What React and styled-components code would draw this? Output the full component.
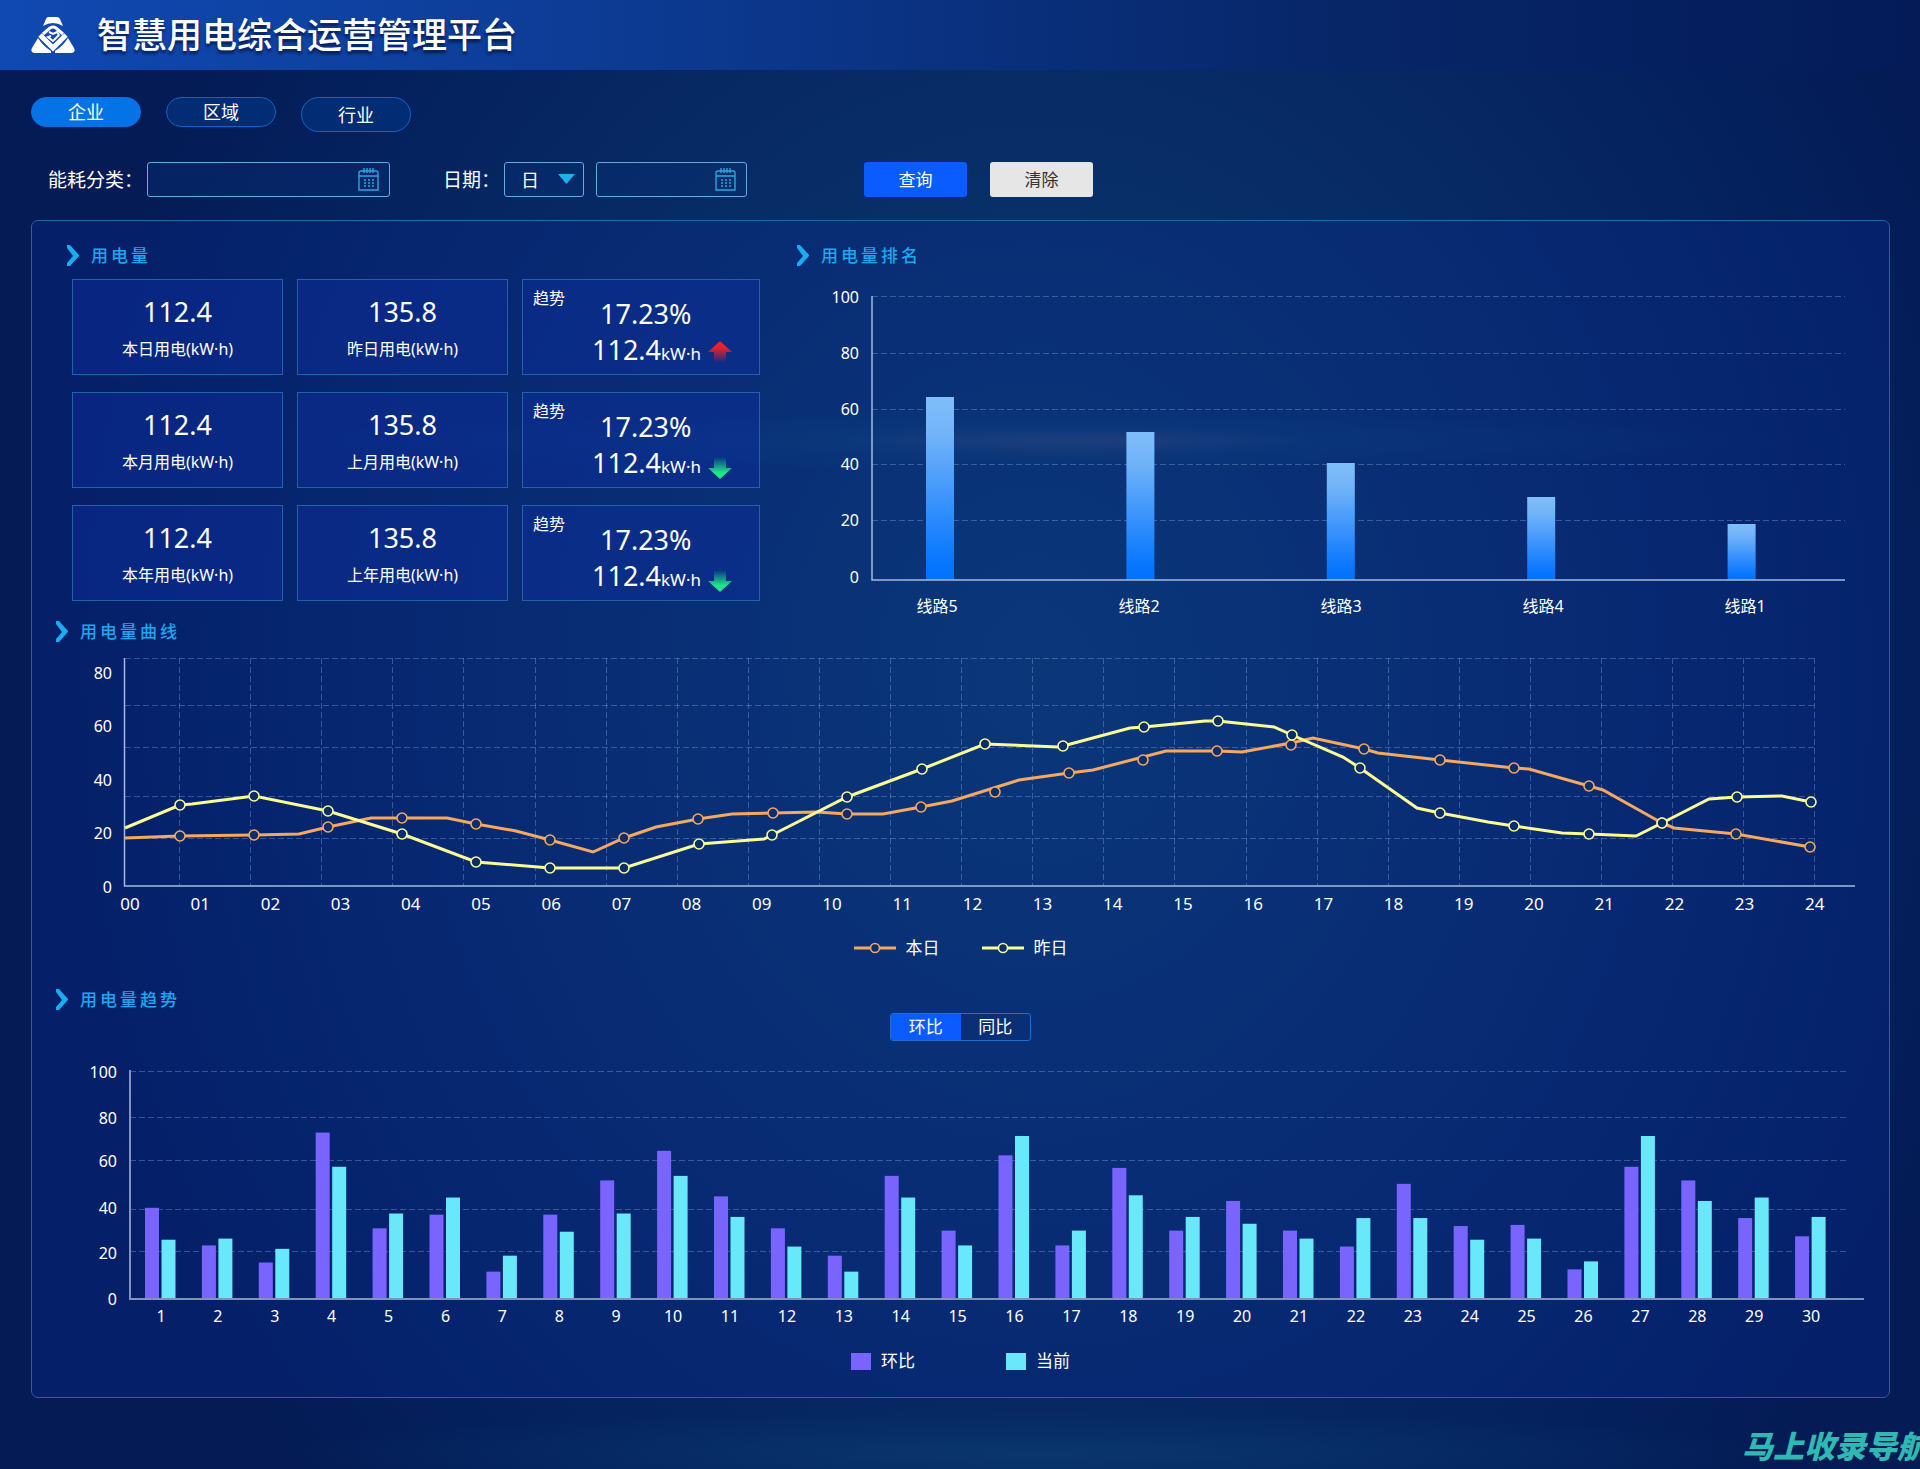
import React, { useState } from 'react';
import styled, { createGlobalStyle } from 'styled-components';

const GlobalStyle = createGlobalStyle`
  * {
    box-sizing: border-box;
  }

  body {
    margin: 0;
    background: #041b55;
  }

  body, button, input, select {
    font-family: "Noto Sans", "Noto Sans CJK SC", sans-serif;
  }
`

const Page = styled.div`
  min-height: 100vh;
  overflow: hidden;
  color: #fff;
  background:
    radial-gradient(ellipse 12% 1% at 56% 30%, rgba(90, 80, 110, 0.35), transparent),
    radial-gradient(ellipse 40% 2% at 54% 30%, rgba(20, 100, 140, 0.25), transparent),
    radial-gradient(ellipse 40% 3% at 54% 99%, rgba(20, 100, 140, 0.25), transparent),
    radial-gradient(ellipse 52% 80% at 54% 46%, #0c3d6e 0%, #082c66 50%, #04205c 85%, #041b55 100%);
`

const Header = styled.header`
  display: flex;
  align-items: center;
  gap: 22px;
  height: 70px;
  padding: 0 31px;
  background: linear-gradient(90deg, #1049b2 0%, #0d3d98 28%, #072668 70%, #041b58 100%);

  h1 {
    margin: 0;
    font-size: 35px;
    line-height: 40px;
    font-weight: 500;
    text-shadow: 0 3px 3px rgba(0, 10, 50, 0.7);
  }
`

const Main = styled.main`
  padding: 27px 30px 0 31px;
`

const Tabs = styled.nav`
  display: flex;
  align-items: flex-start;
  gap: 25px;
  min-height: 35px;
`

const Tab = styled.button`
  width: 110px;
  height: ${({ $tall }) => ($tall ? 35 : 30)}px;
  padding: 0;
  border: 1px solid ${({ $active }) => ($active ? '#0473e6' : '#1763bf')};
  border-radius: 18px;
  background: ${({ $active }) => ($active ? '#0473e6' : '#022c74')};
  color: #fff;
  font-size: 18px;
  line-height: 24px;
  cursor: pointer;
`

const Filters = styled.form`
  display: flex;
  flex-wrap: wrap;
  align-items: center;
  margin: 30px 0 23px;
  padding-left: 17px;
`

const Field = styled.div`
  display: flex;
  align-items: center;
  gap: 4px;
  margin-right: ${({ $space }) => $space}px;

  label {
    font-size: 19px;
    line-height: 24px;
  }
`

const InputBox = styled.div`
  display: flex;
  align-items: center;
  width: ${({ $width }) => $width}px;
  height: 35px;
  padding-right: 10px;
  border: 1px solid #64abe0;
  border-radius: 3px;
  background: rgba(10, 50, 120, 0.35);

  input {
    flex: 1;
    min-width: 0;
    height: 100%;
    padding: 0 8px;
    border: 0;
    outline: 0;
    background: transparent;
    color: #fff;
    font-size: 16px;
  }
`

const SelectBox = styled.div`
  position: relative;
  margin-right: 8px;

  select {
    appearance: none;
    width: 80px;
    height: 35px;
    padding: 0 16px;
    border: 1px solid #64abe0;
    border-radius: 3px;
    background: rgba(10, 50, 120, 0.35);
    color: #fff;
    font-size: 18px;
  }

  option {
    background: #0a2c70;
  }

  svg {
    position: absolute;
    top: 12px;
    right: 9px;
    pointer-events: none;
  }
`

const Button = styled.button`
  width: 103px;
  height: 35px;
  margin-right: 23px;
  padding: 0;
  border: 0;
  border-radius: 3px;
  background: ${({ $primary }) => ($primary ? '#0a5cff' : '#e6e6e6')};
  color: ${({ $primary }) => ($primary ? '#fff' : '#333')};
  font-size: 17px;
  line-height: 24px;
  cursor: pointer;
`

const Panel = styled.div`
  padding: 24px;
  border: 1px solid #1d69a4;
  border-radius: 7px;
  background: rgba(10, 44, 150, 0.3);
`

const TopRow = styled.div`
  display: grid;
  grid-template-columns: 693fr 1068fr;
  gap: 37px;
  padding-left: 11px;
`

const Section = styled.section`
  margin-top: ${({ $top = 0 }) => $top}px;
`

const Heading = styled.h2`
  display: flex;
  align-items: center;
  gap: 12px;
  height: 22px;
  margin: 0 0 ${({ $tight }) => ($tight ? 2 : 12)}px;
  color: #1aa9f0;
  font-size: 17px;
  line-height: 20px;
  font-weight: 500;
  letter-spacing: 3px;
`

const Stats = styled.div`
  display: grid;
  grid-template-columns: 211fr 211fr 238fr;
  gap: 17px 14px;
  padding-left: 5px;
`

const Card = styled.div`
  height: 96px;
  border: 1px solid #1f64a4;
  background: rgba(14, 46, 160, 0.45);
`

const ValueCard = styled(Card)`
  padding-top: 14px;
  text-align: center;

  strong {
    display: block;
    font-size: 27px;
    line-height: 36px;
    font-weight: 400;
  }

  span {
    display: block;
    margin-top: 7px;
    font-size: 16px;
    line-height: 24px;
  }
`

const TrendCard = styled(Card)`
  display: flex;
  align-items: flex-start;
  gap: 27px;
  padding: 7px 10px;

  > span {
    font-size: 16px;
    line-height: 22px;
  }
`

const Figures = styled.div`
  padding-top: 9px;
  font-size: 27px;
  line-height: 36px;

  > div:first-child {
    padding-left: 8px;
  }
`

const Amount = styled.div`
  display: flex;
  align-items: baseline;

  small {
    font-size: 17px;
  }

  svg {
    align-self: center;
    margin-left: 7px;
  }
`

const Chart = styled.svg`
  display: block;
  width: 100%;
  height: auto;

  text {
    fill: #fff;
    font-size: 16px;
  }

  .hour {
    font-size: 17px;
  }

  .grid {
    stroke: rgba(150, 175, 225, 0.36);
    stroke-dasharray: 6 3;
  }

  .axis {
    stroke: #a3bbe2;
    stroke-width: 1.5;
  }

  .wide-axis {
    stroke: #7f93bd;
    stroke-width: 2;
  }
`

const Legend = styled.ul`
  display: flex;
  justify-content: center;
  gap: ${({ $gap }) => $gap}px;
  height: 24px;
  margin: ${({ $top }) => $top}px 0 0;
  padding: 0;
  list-style: none;
  font-size: 17px;
  line-height: 24px;

  li {
    display: flex;
    align-items: center;
    gap: 10px;
  }
`

const Swatch = styled.i`
  width: 20px;
  height: 17px;
  background: ${({ $color }) => $color};
`

const Toggle = styled.div`
  display: flex;
  width: 141px;
  height: 28px;
  margin: 0 auto 19px;
  border: 1px solid #1f6fd2;
  border-radius: 3px;
  overflow: hidden;

  button {
    flex: 1;
    padding: 0;
    border: 0;
    background: transparent;
    color: #fff;
    font-size: 17px;
    line-height: 24px;
    cursor: pointer;
  }

  button[aria-pressed="true"] {
    background: #0a5cff;
  }
`

const Footer = styled.footer`
  display: flex;
  justify-content: flex-end;
  margin-right: -8px;
  padding-top: 32px;
  color: #2fb9b2;
  font-size: 31px;
  line-height: 32px;
  font-weight: 900;
  font-style: italic;
  white-space: nowrap;
`

const ORANGE = '#f5a860';
const YELLOW = '#fbfc94';
const PURPLE = '#7a64ff';
const CYAN = '#68e8f8';

const stats = [
    { now: '本日用电(kW·h)', before: '昨日用电(kW·h)', up: true },
    { now: '本月用电(kW·h)', before: '上月用电(kW·h)', up: false },
    { now: '本年用电(kW·h)', before: '上年用电(kW·h)', up: false },
];

const ranking = [
    { name: '线路5', height: 183 },
    { name: '线路2', height: 148 },
    { name: '线路3', height: 117 },
    { name: '线路4', height: 83 },
    { name: '线路1', height: 56 },
];

// [x, y, has a marker]
const today = [
    [69, 183], [124, 181, 1], [198, 180, 1], [243, 179], [272, 172, 1], [315, 163], [346, 163, 1],
    [391, 163], [420, 169, 1], [460, 176], [494, 185, 1], [537, 197], [568, 183, 1], [600, 172],
    [642, 164, 1], [676, 159], [717, 158, 1], [761, 157], [791, 159, 1], [827, 159], [865, 152, 1],
    [896, 146], [963, 125], [1013, 118, 1], [1037, 115], [1110, 96], [1161, 96, 1], [1186, 97],
    [1235, 88], [1257, 83], [1308, 94, 1], [1322, 98], [1384, 105, 1], [1458, 113, 1], [1473, 114],
    [1533, 131, 1], [1547, 135], [1606, 168, 1], [1618, 173], [1680, 179, 1], [1754, 192, 1],
];

// markers that sit a little below the line
const todayLoose = [[939, 137], [1087, 105], [1235, 90]];

const yesterday = [
    [69, 173], [124, 150, 1], [136, 149], [198, 141, 1], [272, 156, 1], [346, 179, 1], [420, 207, 1],
    [494, 213, 1], [568, 213, 1], [643, 189, 1], [708, 184], [716, 180, 1], [791, 142, 1],
    [866, 114, 1], [929, 89, 1], [1002, 92], [1007, 91, 1], [1074, 73], [1088, 72, 1], [1149, 66],
    [1162, 66, 1], [1218, 72], [1236, 80, 1], [1287, 102], [1304, 113, 1], [1361, 153],
    [1384, 158, 1], [1432, 167], [1458, 171, 1], [1506, 178], [1533, 179, 1], [1580, 181],
    [1606, 168, 1], [1653, 144], [1681, 142, 1], [1726, 141], [1755, 147, 1],
];

const previous = [
    40, 23.5, 16, 73, 31, 37, 12, 37, 52, 65, 45, 31, 19, 54, 30,
    63, 23.5, 57.5, 30, 43, 30, 23, 50.5, 32, 32.5, 13, 58, 52, 35.5, 27.5,
];

const current = [
    26, 26.5, 22, 58, 37.5, 44.5, 19, 29.5, 37.5, 54, 36, 23, 12, 44.5, 23.5,
    71.5, 30, 45.5, 36, 33, 26.5, 35.5, 35.5, 26, 26.5, 16.5, 71.5, 43, 44.5, 36,
];

const Logo = () => (
    <svg width="44" height="36" viewBox="0 0 44 36" fill="#fff" aria-hidden="true">
        <path d="M17 0h9q2 0 3 2l3 7q-10-6-20 0l3-7q1-2 2-2z" />
        <path d="M7 21q5 8 13 13v2H3q-4-1-2-5z" />
        <path d="M37 21q-5 8-13 13v2h17q4-1 2-5z" />
        <g fill="none" stroke="#fff">
            <path d="M9 18l13 13 13-13" strokeWidth="5" />
            <path d="M12 17l7-6q3-2 6 0l7 6" strokeWidth="3" />
            <path d="M18 15l4 2 4-2 2 3-6 6-5-4 3-1" strokeWidth="2" />
        </g>
    </svg>
);

const Chevron = () => (
    <svg width="12" height="22" viewBox="0 0 12 22" fill="#18adf2" aria-hidden="true">
        <path d="M0 0h3l9 10v1L3 21H0v-3l6-7-6-8z" />
    </svg>
);

const CalendarIcon = () => (
    <svg width="21" height="23" viewBox="0 0 21 23" fill="none" stroke="#2ba6e0" strokeWidth="1.4" aria-hidden="true">
        <path d="M3 3h15q2 0 2 2v17H1V5q0-2 2-2zM1 8h19" />
        <path d="M6 0v5M9 0v5M12 0v5M15 0v5" />
        <path d="M6 12h2M10 12h2M14 12h2M6 15h2M10 15h2M14 15h2M6 18h2M10 18h2M14 18h2" />
    </svg>
);

const TrendArrow = ({ up }) => {
    const id = up ? 'arrow-up' : 'arrow-down';
    const color = up ? '#e8202c' : '#1ee48c';

    return (
        <svg width="24" height="28" viewBox="0 0 24 28" role="img" aria-label={up ? '上升' : '下降'}>
            <defs>
                <linearGradient id={id} x1="0" x2="0" y1={up ? 0 : 1} y2={up ? 1 : 0}>
                    <stop offset="0.3" stopColor={color} />
                    <stop offset="1" stopColor={color} stopOpacity="0" />
                </linearGradient>
            </defs>
            <path
                d={up ? 'M12 3l12 11h-6v11H6V14H0z' : 'M12 28L0 17h6V6h12v11h6z'}
                fill={`url(#${id})`}
            />
        </svg>
    );
};

const YLabels = ({ x, items }) => items.map(([label, y]) => (
    <text key={label} x={x} y={y + 6} textAnchor="end">{label}</text>
));

const RankingChart = () => (
    <Chart viewBox="0 0 1068 342" role="img" aria-label="用电量排名">
        <defs>
            <linearGradient id="rank" x1="0" x2="0" y1="0" y2="1">
                <stop offset="0" stopColor="#80bdf9" />
                <stop offset="0.2" stopColor="#72b4f9" />
                <stop offset="0.9" stopColor="#0776ff" />
                <stop offset="1" stopColor="#0072ff" />
            </linearGradient>
        </defs>
        <YLabels x={62} items={[[100, 18], [80, 74], [60, 130], [40, 185], [20, 241], [0, 298]]} />
        {[17.5, 74.5, 130.5, 185.5, 241.5].map(y => (
            <line key={y} className="grid" x1="75" x2="1048" y1={y} y2={y} />
        ))}
        {ranking.map(({ name, height }, i) => (
            <g key={name}>
                <rect x={129 + i * 200.4} y={301 - height} width="28" height={height} fill="url(#rank)" />
                <text x={140 + i * 202} y="333" textAnchor="middle">{name}</text>
            </g>
        ))}
        <path className="axis" d="M75 17v284h973" fill="none" />
    </Chart>
);

const Series = ({ points, loose = [], color }) => (
    <g fill="none" stroke={color}>
        <polyline points={points.map(([x, y]) => `${x},${y}`).join(' ')} strokeWidth="3" />
        {[...points.filter(p => p[2]), ...loose].map(([x, y]) => (
            <circle key={x} cx={x} cy={y} r="5" fill="#0a2d6b" strokeWidth="1.6" />
        ))}
    </g>
);

const CurveChart = () => (
    <Chart viewBox="0 0 1809 265" role="img" aria-label="用电量曲线">
        <YLabels x={56} items={[[80, 18], [60, 71], [40, 125], [20, 178], [0, 232]]} />
        {[3.5, 50.5, 92.5, 141.5, 183.5].map(y => (
            <line key={y} className="grid" x1="69" x2="1759" y1={y} y2={y} />
        ))}
        {Array.from({ length: 24 }, (_, i) => Math.round(123 + i * 71.1) + 0.5).map(x => (
            <line key={x} className="grid" x1={x} x2={x} y1="3" y2="231" />
        ))}
        <path className="axis" d="M68.5 3v228H1799" fill="none" />
        {Array.from({ length: 25 }, (_, i) => (
            <text key={i} className="hour" x={74 + i * 70.2} y="255" textAnchor="middle">
                {String(i).padStart(2, '0')}
            </text>
        ))}
        <Series points={today} loose={todayLoose} color={ORANGE} />
        <Series points={yesterday} color={YELLOW} />
    </Chart>
);

const TrendChart = () => (
    <Chart viewBox="0 0 1809 270" role="img" aria-label="用电量趋势">
        <YLabels x={61} items={[[100, 12], [80, 58], [60, 101], [40, 148], [20, 193], [0, 239]]} />
        {[11.5, 57.5, 100.5, 149.5, 191.5].map(y => (
            <line key={y} className="grid" x1="74" x2="1791" y1={y} y2={y} />
        ))}
        {previous.map((value, i) => (
            <g key={i}>
                <rect x={89 + i * 56.9} y={239 - value * 2.28} width="14" height={value * 2.28} fill={PURPLE} />
                <rect x={105.5 + i * 56.9} y={239 - current[i] * 2.28} width="14" height={current[i] * 2.28} fill={CYAN} />
                <text x={105 + i * 56.9} y="262" textAnchor="middle">{i + 1}</text>
            </g>
        ))}
        <path className="wide-axis" d="M74 10v229h1734" fill="none" />
    </Chart>
);

const LineKey = ({ color }) => (
    <svg width="42" height="12" viewBox="0 0 42 12" stroke={color} aria-hidden="true">
        <path d="M0 6h42" strokeWidth="3" />
        <circle cx="21" cy="6" r="4.5" fill="#0a2d6b" strokeWidth="1.6" />
    </svg>
);

const App = () => {
    const [tab, setTab] = useState('企业');
    const [mode, setMode] = useState('环比');

    return (
        <Page>
            <GlobalStyle />
            <Header>
                <Logo />
                <h1>智慧用电综合运营管理平台</h1>
            </Header>
            <Main>
                <Tabs>
                    {['企业', '区域', '行业'].map((name, i) => (
                        <Tab key={name} type="button" $tall={i === 2} $active={tab === name} onClick={() => setTab(name)}>
                            {name}
                        </Tab>
                    ))}
                </Tabs>
                <Filters onSubmit={e => e.preventDefault()}>
                    <Field $space={53}>
                        <label htmlFor="category">能耗分类：</label>
                        <InputBox $width={243}>
                            <input id="category" type="text" />
                            <CalendarIcon />
                        </InputBox>
                    </Field>
                    <Field $space={117}>
                        <label htmlFor="unit">日期：</label>
                        <SelectBox>
                            <select id="unit" defaultValue="日">
                                <option>日</option>
                                <option>月</option>
                                <option>年</option>
                            </select>
                            <svg width="17" height="10" viewBox="0 0 17 10" fill="#1fb0ee" aria-hidden="true">
                                <path d="M0 0h17L8.500 10z" />
                            </svg>
                        </SelectBox>
                        <InputBox $width={151}>
                            <input type="text" aria-label="日期" />
                            <CalendarIcon />
                        </InputBox>
                    </Field>
                    <Button type="submit" $primary>查询</Button>
                    <Button type="reset">清除</Button>
                </Filters>

                <Panel>
                    <TopRow>
                        <Section>
                            <Heading><Chevron />用电量</Heading>
                            <Stats>
                                {stats.map(({ now, before, up }) => (
                                    <React.Fragment key={now}>
                                        <ValueCard>
                                            <strong>112.4</strong>
                                            <span>{now}</span>
                                        </ValueCard>
                                        <ValueCard>
                                            <strong>135.8</strong>
                                            <span>{before}</span>
                                        </ValueCard>
                                        <TrendCard>
                                            <span>趋势</span>
                                            <Figures>
                                                <div>17.23%</div>
                                                <Amount>
                                                    112.4<small>kW·h</small>
                                                    <TrendArrow up={up} />
                                                </Amount>
                                            </Figures>
                                        </TrendCard>
                                    </React.Fragment>
                                ))}
                            </Stats>
                        </Section>
                        <Section>
                            <Heading><Chevron />用电量排名</Heading>
                            <RankingChart />
                        </Section>
                    </TopRow>

                    <Section>
                        <Heading><Chevron />用电量曲线</Heading>
                        <CurveChart />
                        <Legend $gap={42} $top={16}>
                            <li><LineKey color={ORANGE} />本日</li>
                            <li><LineKey color={YELLOW} />昨日</li>
                        </Legend>
                    </Section>

                    <Section $top={29}>
                        <Heading $tight><Chevron />用电量趋势</Heading>
                        <Toggle>
                            {['环比', '同比'].map(name => (
                                <button key={name} type="button" aria-pressed={mode === name} onClick={() => setMode(name)}>
                                    {name}
                                </button>
                            ))}
                        </Toggle>
                        <TrendChart />
                        <Legend $gap={91} $top={19}>
                            <li><Swatch $color={PURPLE} />环比</li>
                            <li><Swatch $color={CYAN} />当前</li>
                        </Legend>
                    </Section>
                </Panel>
            </Main>
            <Footer>马上收录导航</Footer>
        </Page>
    );
};

export default App;
